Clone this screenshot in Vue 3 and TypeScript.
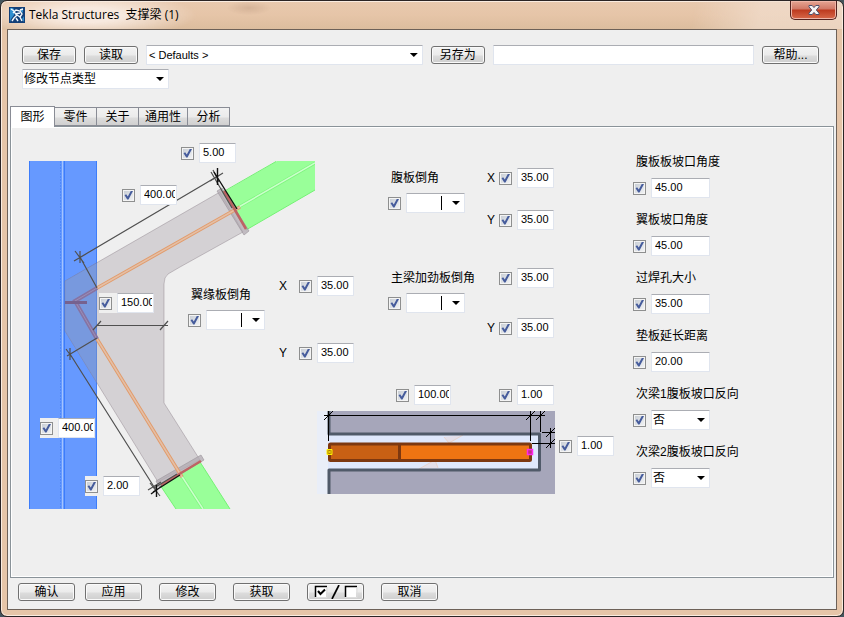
<script setup lang="ts">
import { reactive, ref } from 'vue'

interface Dim {
  on: boolean
  value: string
  name: string
}

const dim = (name: string, value: string): Dim => ({ on: true, value, name })

const tabs: string[] = ['图形', '零件', '关于', '通用性', '分析']
const activeTab = ref<string>('图形')
const preset = ref<string>('< Defaults >')
const saveName = ref<string>('')
const nodeType = ref<string>('修改节点类型')

const pinned = reactive([
  { ...dim('上端间隙', '5.00'), place: 'upper-gap' },
  { ...dim('上肢长度', '400.00'), place: 'upper-length' },
  { ...dim('宽度', '150.00'), place: 'depth' },
  { ...dim('下肢长度', '400.00'), place: 'lower-length' },
  { ...dim('下端间隙', '2.00'), place: 'lower-gap' },
])

const chamfers = reactive([
  { id: 'flange', title: '翼缘板倒角', on: true, rows: [{ axis: 'X', ...dim('X', '35.00') }, { axis: 'Y', ...dim('Y', '35.00') }] },
  { id: 'web', title: '腹板倒角', on: true, rows: [{ axis: 'X', ...dim('X', '35.00') }, { axis: 'Y', ...dim('Y', '35.00') }] },
  { id: 'stiffener', title: '主梁加劲板倒角', on: true, rows: [{ axis: '', ...dim('X', '35.00') }, { axis: 'Y', ...dim('Y', '35.00') }] },
])

const weldTop = reactive<Dim[]>([dim('垫板长度', '100.00'), dim('端部间隙', '1.00')])
const weldSide = reactive<Dim>(dim('侧面间隙', '1.00'))

const settings = reactive([
  { id: 's1', title: '腹板板坡口角度', on: true, value: '45.00', list: false },
  { id: 's2', title: '翼板坡口角度', on: true, value: '45.00', list: false },
  { id: 's3', title: '过焊孔大小', on: true, value: '35.00', list: false },
  { id: 's4', title: '垫板延长距离', on: true, value: '20.00', list: false },
  { id: 's5', title: '次梁1腹板坡口反向', on: true, value: '否', list: true },
  { id: 's6', title: '次梁2腹板坡口反向', on: true, value: '否', list: true },
])
</script>

<template>
  <div class="window">
    <header class="titlebar">
      <svg class="app-icon" viewBox="0 0 16 16" aria-hidden="true">
        <rect width="16" height="16" fill="#123f78" />
        <path d="M1 1h3l2 3-1 4-3 4-1 3zM14 1l-3 2 3 3zM15 9l-2 3 2 3z" fill="#2f8fd0" />
        <path d="M2 2l3 2M4 6l3-3 4 1 2 3-2 3M5 5l3 3-3 3-2 3M8 8l3 2 2 4M7 11l2 3M11 3l3-1M6 7l5-1" fill="none" stroke="#f3f8fc" stroke-width="1.4" />
      </svg>
      <h1>Tekla Structures&nbsp; 支撑梁 (1)</h1>
      <button class="close" type="button" aria-label="关闭">
        <svg viewBox="0 0 12 10" aria-hidden="true">
          <path d="M1 .5h3.2L6 2.6 7.800 .5H11v1.300L8.300 5 11 8.200v1.300H7.800L6 7.400 4.200 9.500H1V8.200L3.700 5 1 1.800z" fill="#f6f4f4" stroke="#4c506c" />
        </svg>
      </button>
    </header>

    <main class="client">
      <div class="toolbar">
        <button class="btn" type="button">保存</button>
        <button class="btn" type="button">读取</button>
        <span class="combo preset">
          <select v-model="preset" aria-label="预设">
            <option>&lt; Defaults &gt;</option>
          </select>
        </span>
        <button class="btn" type="button">另存为</button>
        <input v-model="saveName" class="text save-name" type="text" aria-label="另存为名称" />
        <button class="btn wide" type="button">帮助...</button>
      </div>
      <div class="toolbar second">
        <span class="combo node-type">
          <select v-model="nodeType" aria-label="节点类型">
            <option>修改节点类型</option>
          </select>
        </span>
      </div>

      <nav class="tabs" role="tablist">
        <button
          v-for="tab in tabs"
          :key="tab"
          type="button"
          role="tab"
          class="tab"
          :class="{ active: tab === activeTab }"
          :aria-selected="tab === activeTab"
          @click="activeTab = tab"
        >{{ tab }}</button>
      </nav>

      <section class="panel">
        <div class="joint">
          <svg class="joint-drawing" viewBox="29 161 286 348" aria-hidden="true">
            <rect x="29" y="161" width="68" height="348" fill="#6699ff" />
            <path d="M29.500 161V509M96.500 161V509M64.500 161V509" stroke="#3d7dfa" fill="none" />
            <path d="M60.500 161V509" stroke="#4d88fb" stroke-dasharray="2 1" />
            <path d="M62.500 161V509" stroke="#a3c4ff" />
            <path d="M222 193L277 161H315V190L246 230z" fill="#99ff99" />
            <path d="M222 192.500L276 161.500M246 230L315 190" stroke="#74f274" fill="none" />
            <path d="M237 208L315 163" stroke="#7ff57f" stroke-width="3" />
            <path d="M237 208L315 163" stroke="#ccffcc" stroke-width="1.500" />
            <path d="M160 485L200 462L230 509H176z" fill="#99ff99" />
            <path d="M160 485L176 509M200 462L230 509" stroke="#74f274" fill="none" />
            <path d="M181 475L203 509" stroke="#7ff57f" stroke-width="3" />
            <path d="M181 475L203 509" stroke="#ccffcc" stroke-width="1.500" />
            <path d="M65 281L220 192L243 232L180 267L168 274Q164 277 164 284V403L200 460L158 482L65 331z" fill="#5f5060" fill-opacity=".19" stroke="#82767f" stroke-opacity=".4" />
            <path d="M65 281L97 263V383L65 331z" fill="#a8b8d8" fill-opacity=".3" />
            <path d="M217 191L222 188L249 231L244 235z" fill="#b2aab2" fill-opacity=".75" stroke="#9b939b" stroke-width=".6" />
            <path d="M156 481L201 455L204 460L159 487z" fill="#b2aab2" fill-opacity=".75" stroke="#9b939b" stroke-width=".6" />
            <path d="M97 288L240 207M97 339L182 477" stroke="#e29c6c" stroke-width="3.500" />
            <path d="M97 288L240 207M97 339L182 477" stroke="#e4bfa6" stroke-width="1.500" />
            <path d="M97 288L75 301L97 339" fill="none" stroke="#8673a3" stroke-width="4" />
            <path d="M97 288L75 301L97 339" fill="none" stroke="#9a8fb7" />
            <path d="M65 302.500H87" stroke="#76628f" stroke-width="3" />
            <path d="M224 191L246 229M161 485L201 461" stroke="#bd6464" stroke-width="2.500" />
            <g fill="none" stroke="#505050" stroke-width="1.200">
              <path d="M79 258L218 176M80 257L97 288M80 251V263M75 251L84 263M74 261L86 254" />
              <path d="M211 172L232 208M210 181L223 173M213 170L219 182" />
              <path d="M97 325.500H168M93 330L101 321M160 330L168 321" />
              <path d="M70 354L156 490M97 338L67 356M70 348V360M66 349L74 360" />
              <path d="M154 488L177 474M148 490L161 482M150 483L160 496" />
            </g>
            <path d="M217.500 168V185M214 172L237 209M153 492L180 475M156.500 485V497M151 494L162 486" stroke="#111" stroke-width="1.400" fill="none" />
          </svg>
          <div v-for="d in pinned" :key="d.place" class="field pinned" :class="d.place">
            <input v-model="d.on" type="checkbox" class="check" :aria-label="d.name" />
            <input v-model="d.value" type="text" class="text num" :aria-label="d.name" />
          </div>
        </div>

        <div class="details">
          <div v-for="c in chamfers" :key="c.id" class="chamfer" :class="c.id">
            <div class="shape">
              <label :for="c.id">{{ c.title }}</label>
              <div class="field">
                <input v-model="c.on" type="checkbox" class="check" :aria-label="c.title" />
                <span class="combo shape-combo">
                  <select :id="c.id"><option value=""></option></select>
                </span>
              </div>
            </div>
            <div class="axes">
              <div v-for="(r, i) in c.rows" :key="i" class="field">
                <label class="axis" :for="c.id + i">{{ r.axis }}</label>
                <input v-model="r.on" type="checkbox" class="check" :aria-label="r.name" />
                <input :id="c.id + i" v-model="r.value" type="text" class="text num" />
              </div>
            </div>
          </div>

          <div class="weld">
            <div class="weld-top">
              <div v-for="d in weldTop" :key="d.name" class="field">
                <input v-model="d.on" type="checkbox" class="check" :aria-label="d.name" />
                <input v-model="d.value" type="text" class="text num" :aria-label="d.name" />
              </div>
            </div>
            <div class="weld-body">
              <svg class="weld-drawing" viewBox="317 411 238 83" aria-hidden="true">
                <rect x="317" y="411" width="12" height="83" fill="#e9eef8" />
                <rect x="328" y="411" width="227" height="83" fill="#a6a6ba" />
                <rect x="328" y="434" width="212" height="36" fill="#dfe8fc" />
                <path d="M444 437l5 6 14-8M419 469l16-9 3 8" fill="#e3dfea" stroke="#e8d3cc" />
                <path d="M329 411V434H539.500V470H329V494" fill="none" stroke="#505a69" stroke-width="3" stroke-linejoin="round" />
                <rect x="329.500" y="444" width="201" height="16.500" rx="1" fill="#ee7412" />
                <rect x="329.500" y="444" width="70" height="16.500" fill="#c86014" />
                <rect x="329.500" y="444" width="201" height="16.500" rx="1" fill="none" stroke="#7d3810" stroke-width="3" />
                <path d="M399.500 444V461" stroke="#7d3810" stroke-width="3" />
                <g fill="none" stroke="#000">
                  <path d="M324 415.500H545M328.500 411V441M530.500 411V441M540.500 411V432M542 432.500H555M532 443.500H555M550.500 428V448" />
                  <path d="M324 420L333 411M526 420L535 411M536 420L545 411M546 437L555 428M546 448L555 439" />
                </g>
                <path d="M327 449.500h5v5h-5zM328 450.500l3 3M331 450.500l-3 3" fill="#ad7a08" stroke="#fff000" />
                <path d="M527.500 449.500h5v5h-5z" fill="#c02e86" stroke="#ff28ee" stroke-width="1.500" />
              </svg>
              <div class="field weld-side">
                <input v-model="weldSide.on" type="checkbox" class="check" :aria-label="weldSide.name" />
                <input v-model="weldSide.value" type="text" class="text num" :aria-label="weldSide.name" />
              </div>
            </div>
          </div>
        </div>

        <div class="settings">
          <div v-for="s in settings" :key="s.id" class="setting">
            <label :for="s.id">{{ s.title }}</label>
            <div class="field">
              <input v-model="s.on" type="checkbox" class="check" :aria-label="s.title" />
              <span v-if="s.list" class="combo">
                <select :id="s.id" v-model="s.value">
                  <option>否</option>
                  <option>是</option>
                </select>
              </span>
              <input v-else :id="s.id" v-model="s.value" type="text" class="text" />
            </div>
          </div>
        </div>
      </section>

      <footer class="actions">
        <div class="pair">
          <button class="btn wide" type="button">确认</button>
          <button class="btn wide" type="button">应用</button>
        </div>
        <button class="btn wide" type="button">修改</button>
        <button class="btn wide" type="button">获取</button>
        <button class="btn wide" type="button" aria-label="全选 / 全不选">
          <svg class="toggle-icon" viewBox="0 0 44 14" aria-hidden="true">
            <path d="M1 1h11v11H1zM31 1h11v11H31z" fill="#fff" />
            <path d="M1.500 12V1.500H13M31.500 12V1.500H43" fill="none" stroke="#000" stroke-width="1.500" />
            <path d="M1 12.500H13V2M31 12.500H43V2" fill="none" stroke="#ddd" />
            <path d="M4 6l2.500 3L11 4.500" fill="none" stroke="#000" stroke-width="2" />
            <path d="M18 14L25 0" stroke="#000" stroke-width="1.700" />
          </svg>
        </button>
        <button class="btn wide" type="button">取消</button>
      </footer>
    </main>
  </div>
</template>

<style>
body {
  margin: 0;
  background: #43545c;
}
</style>

<style scoped>
.window,
.window * {
  box-sizing: border-box;
}

.window {
  display: flex;
  flex-direction: column;
  min-height: 100vh;
  padding: 0 6px 6px;
  border: 1px solid #2b2424;
  border-radius: 7px;
  background: linear-gradient(#e8c9ae, #e6c5a8 14px, #dcbd9e 28px, #e6c5a8 29px);
  box-shadow: inset 0 0 0 1px #faece0;
  color: #000;
  font: 12px/20px "Liberation Sans", "Noto Sans CJK SC", sans-serif;
}

button,
input,
select {
  margin: 0;
  color: inherit;
  font: inherit;
}

.titlebar {
  display: flex;
  align-items: center;
  height: 28px;
  margin: 0 -5px;
  padding: 0 5px 0 7px;
  background:
    radial-gradient(ellipse 110px 24px at 85px 14px, #f7e9df 30%, transparent),
    radial-gradient(ellipse 22px 7px at 247px 7px, #b9957c66, transparent),
    linear-gradient(100deg, transparent 82%, #f2dfd0aa 90%, #f2dfd0aa);
  border-radius: 6px 6px 0 0;
}

.app-icon {
  width: 16px;
  height: 16px;
}

h1 {
  flex: 1;
  margin: 0 0 0 4px;
  font: 12px/20px "Open Sans", "Noto Sans CJK SC", sans-serif;
}

.close {
  display: flex;
  align-items: center;
  justify-content: center;
  align-self: flex-start;
  width: 47px;
  height: 19px;
  padding: 0;
  border: 1px solid #54231f;
  border-top: 0;
  border-radius: 0 0 5px 5px;
  background: linear-gradient(#e6a593, #d17866 8px, #bd3a1f 9px, #d8694a);
  box-shadow: inset 0 0 0 1px #efb5a7;
}

.close svg {
  width: 12px;
  height: 10px;
}

.client {
  display: flex;
  flex: 1;
  flex-direction: column;
  padding: 15px 2px 8px;
  border: 1px solid #6d6158;
  background: #efefef;
}

.toolbar {
  display: flex;
  align-items: center;
  gap: 8px;
  padding: 0 15px 0 12px;
}

.toolbar.second {
  padding-top: 4px;
}

.btn {
  display: flex;
  flex: none;
  align-items: center;
  justify-content: center;
  width: 54px;
  height: 18px;
  padding: 0;
  border: 1px solid #707070;
  border-radius: 3px;
  background: linear-gradient(#f3f3f3, #ebebeb 8px, #dcdcdc 9px, #cecece);
  box-shadow: inset 0 0 0 1px #fafafa;
  line-height: 16px;
}

.btn.wide {
  width: 57px;
}

.text,
.combo {
  height: 20px;
  border: 1px solid #e0e5ee;
  border-top-color: #abadb3;
  border-radius: 1px;
  background: #fff;
}

.text {
  width: 59px;
  padding: 0 1px 2px 3px;
  font-size: 11px;
  outline: none;
}

.text.num {
  width: 37px;
}

.combo {
  display: grid;
  flex: none;
  align-items: center;
  width: 59px;
}

.combo > select,
.combo::after {
  grid-area: 1 / 1;
}

.combo::after {
  justify-self: end;
  width: 8px;
  height: 4px;
  margin-right: 4px;
  background: #000;
  clip-path: polygon(0 0, 100% 0, 50% 100%);
  content: "";
  pointer-events: none;
}

.combo > select {
  width: 100%;
  height: 18px;
  padding: 0 14px 0 1px;
  border: 0;
  appearance: none;
  background: none;
  line-height: 18px;
  outline: none;
}

.combo.preset {
  flex: 281 1 0;
}

.combo.preset > select {
  padding-left: 2px;
  font-size: 11px;
}

.save-name {
  flex: 261 1 0;
  min-width: 0;
}

.combo.node-type {
  width: 147px;
}

.shape-combo > select {
  width: 35px;
  height: 14px;
  padding: 0;
  border-right: 1px solid #000;
  border-radius: 0;
}

.tabs {
  display: flex;
  align-items: flex-end;
  height: 21px;
  margin-top: 17px;
}

.tab {
  min-width: 43px;
  height: 19px;
  margin: 0 0 1px -1px;
  padding: 0 6px;
  border: 1px solid #898c95;
  border-radius: 0;
  background: linear-gradient(#f2f2f2, #ebebeb 9px, #dcdcdc 10px, #d0d0d0);
  line-height: 18px;
}

.tab.active {
  z-index: 1;
  min-width: 45px;
  height: 21px;
  margin: 0;
  border-bottom: 0;
  background: #fff;
}

.panel {
  display: flex;
  flex: 1;
  align-items: flex-start;
  margin-top: -1px;
  border: 1px solid #8a9399;
  box-shadow: inset 0 0 0 1px #fff;
  padding: 1px 1px 10px;
}

.joint,
.details {
  flex: none;
}

.joint {
  position: relative;
  width: 305px;
  padding: 33px 0 0 17px;
}

.joint-drawing {
  display: block;
  width: 286px;
  height: 348px;
}

.field {
  display: flex;
  align-items: center;
  gap: 5px;
}

.check {
  flex: none;
  display: grid;
  place-items: center;
  width: 13px;
  height: 13px;
  border: 1px solid #8e8f8f;
  appearance: none;
  background: linear-gradient(135deg, #c5cbd3, #f4f5f6);
  box-shadow: inset 0 0 0 1px #f4f4f4;
}

.check:checked::before {
  width: 9px;
  height: 9px;
  background: #465c9c;
  clip-path: polygon(6% 52%, 24% 42%, 42% 66%, 78% 0, 100% 6%, 50% 100%, 36% 100%);
  content: "";
}

.pinned {
  position: absolute;
  background: #efefef;
}

.upper-gap {
  left: 169px;
  top: 15px;
}

.upper-length {
  left: 110px;
  top: 57px;
}

.depth {
  left: 87px;
  top: 165px;
}

.lower-length {
  left: 28px;
  top: 290px;
}

.lower-gap {
  left: 73px;
  top: 348px;
}

.details {
  position: relative;
  padding-top: 40px;
}

.chamfer {
  display: flex;
  margin-left: 71px;
}

.shape {
  width: 99px;
}

.shape > label,
.setting > label {
  display: block;
  padding-left: 3px;
  white-space: nowrap;
}

.shape > .field {
  margin-top: 5px;
}

.axes {
  display: flex;
  flex-direction: column;
  gap: 22px;
}

.axes .field {
  gap: 0;
}

.axes .text {
  margin-left: 5px;
}

.axis {
  width: 12px;
}

.stiffener {
  margin-top: 38px;
}

.stiffener .axes {
  gap: 30px;
}

/* The flange chamfer sits in the open corner of the joint drawing. */
.flange {
  position: absolute;
  left: -129px;
  top: 148px;
  margin: 0;
}

.flange .shape {
  width: 91px;
  padding-top: 9px;
}

.flange .axes {
  gap: 47px;
}

.flange .axis {
  width: 20px;
}

.weld {
  margin-top: 47px;
}

.weld-top {
  display: flex;
  gap: 48px;
  padding-left: 79px;
}

.weld-body {
  display: flex;
  align-items: flex-start;
  gap: 4px;
  margin-top: 6px;
}

.weld-drawing {
  width: 238px;
  height: 83px;
}

.weld-side {
  margin-top: 25px;
}

.settings {
  display: flex;
  flex-direction: column;
  gap: 12px;
  margin-left: 19px;
  padding-top: 24px;
}

.setting > .field {
  margin-top: 6px;
}

.actions {
  display: flex;
  gap: 17px;
  margin-top: 5px;
  padding-left: 8px;
}

.pair {
  display: flex;
  gap: 10px;
}

.toggle-icon {
  width: 44px;
  height: 14px;
}
</style>
